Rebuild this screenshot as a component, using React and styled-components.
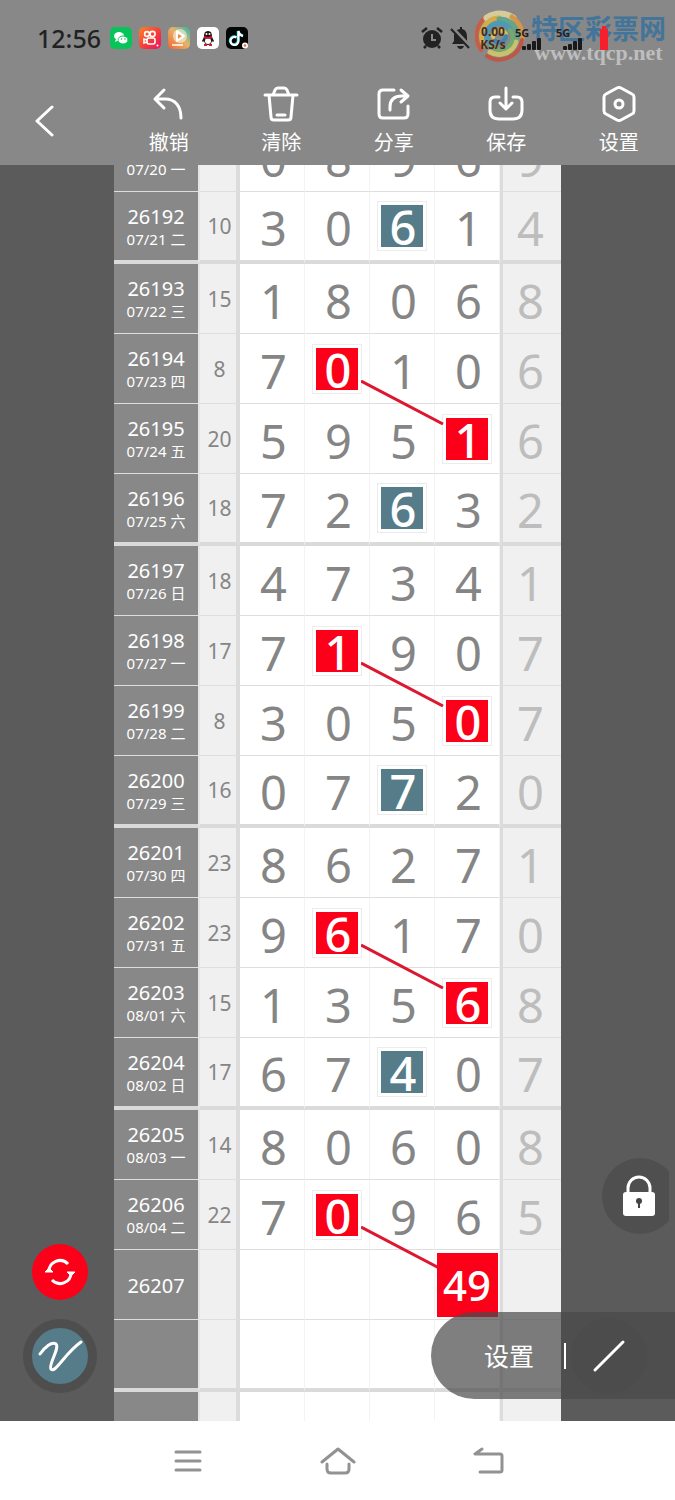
import React from "react";
import styled, { createGlobalStyle } from "styled-components";

const GlobalStyle = createGlobalStyle`
  * {
    box-sizing: border-box;
  }
  body {
    margin: 0;
    background: #fff;
    font-family: "Noto Sans", "Noto Sans CJK SC", sans-serif;
  }
  button {
    border: 0;
    padding: 0;
    background: none;
    color: inherit;
    font: inherit;
    cursor: pointer;
  }
  svg {
    display: block;
  }
`;

const Screen = styled.div`
  display: flex;
  flex-direction: column;
  height: 100vh;
  overflow: hidden;
`;

const Header = styled.header`
  flex: none;
  position: relative;
  background: #888;
  color: #fff;
`;

const StatusBar = styled.div`
  position: relative;
  z-index: 1;
  display: flex;
  align-items: center;
  justify-content: space-between;
  height: 76px;
  padding: 0 66px 0 37px;
  color: #222;
`;

const StatusGroup = styled.div`
  display: flex;
  align-items: center;
  gap: 7px;
`;

const Clock = styled.time`
  margin-right: 2px;
  font-size: 25px;
  font-weight: 500;
  line-height: 28px;
`;

const Speed = styled.div`
  width: 30px;
  color: #4a2a20;
  font-size: 12px;
  font-weight: 700;
  line-height: 13px;
  text-align: center;
`;

const Signal = styled.div`
  display: flex;
  flex-direction: column;
  width: 34px;
  font-size: 11px;
  font-weight: 700;
  line-height: 11px;
  svg {
    align-self: center;
  }
`;

const Watermark = styled.div`
  position: absolute;
  top: 9px;
  right: 9px;
  display: flex;
  align-items: center;
  gap: 6px;
  opacity: 0.8;
`;

const WatermarkText = styled.div`
  display: flex;
  flex-direction: column;
  align-items: center;
  padding-top: 4px;
`;

const SiteName = styled.span`
  color: #33709f;
  font-family: "Noto Sans CJK SC", sans-serif;
  font-size: 27px;
  font-weight: 700;
  line-height: 30px;
`;

const SiteUrl = styled.span`
  color: #ccc;
  font-family: "Liberation Serif", serif;
  font-size: 22px;
  font-weight: 700;
  line-height: 20px;
`;

const Toolbar = styled.nav`
  display: grid;
  grid-template-columns: repeat(6, 1fr);
  height: 89px;
`;

const BackButton = styled.button`
  display: flex;
  align-items: center;
  padding-left: 34px;
`;

const Tool = styled.button`
  display: flex;
  flex-direction: column;
  align-items: center;
  padding-top: 10px;
  gap: 8px;
  font-size: 20px;
  line-height: 26px;
`;

const Chart = styled.main`
  flex: 1;
  min-height: 0;
  overflow: hidden;
  position: relative;
  background: #5b5b5b;
`;

const Board = styled.table`
  width: 447px;
  margin: -43px auto 0;
  table-layout: fixed;
  border-collapse: separate;
  border-spacing: 0;
  background: #fff;
  color: #858585;
`;

const Row = styled.tr`
  height: ${(p) => (p.$last ? 72 : 70)}px;
  & > * {
    padding: 0;
    border-bottom: ${(p) => (p.$last ? "4px solid #dadada" : "1px solid #dedede")};
  }
`;

const Issue = styled.th`
  background: #888;
  border-right: 2px solid #e6e6e6;
  color: #fff;
  font-size: 20px;
  font-weight: 400;
  line-height: 24px;
`;

const IssueText = styled.div`
  padding-top: 2px;
`;

const Day = styled.div`
  font-size: 15px;
  line-height: 21px;
  white-space: nowrap;
`;

const Sum = styled.td`
  background: #f0f0f0;
  border-right: 4px solid #dcdcdc;
  font-size: 21px;
  text-align: center;
`;

const SumText = styled.div`
  padding-left: 3px;
`;

const Cell = styled.td`
  position: relative;
  border-right: 1px solid #f3f3f3;
  font-size: 47px;
  line-height: 50px;
  text-align: center;
`;

const Extra = styled.td`
  background: #f0f0f0;
  border-left: 3px solid #dcdcdc;
  color: #bdbdbd;
  font-size: 47px;
  line-height: 50px;
  text-align: center;
`;

const Digit = styled.div`
  padding: ${(p) => (p.$extra ? "4px 3px 0 0" : "4px 0 0 3px")};
`;

const Mark = styled.div`
  width: 50px;
  height: 50px;
  margin: 0 auto;
  padding-left: 2px;
  border: 1px solid #ececec;
  background: linear-gradient(${(p) => p.$color}, ${(p) => p.$color}) center / 42px 42px no-repeat #fff;
  color: #fff;
  font-weight: 500;
`;

const Pick = styled.div`
  position: relative;
  z-index: 1;
  display: flex;
  align-items: center;
  justify-content: center;
  width: 61px;
  height: 64px;
  margin: 0 auto;
  background: #fd0019;
  color: #fff;
  font-size: 42px;
  font-weight: 500;
`;

const Link = styled.svg`
  position: absolute;
  z-index: 1;
  left: 56px;
  top: 46px;
`;

const FloatLeft = styled.div`
  position: absolute;
  left: 23px;
  bottom: 28px;
  display: flex;
  flex-direction: column;
  align-items: center;
  gap: 19px;
`;

const RoundButton = styled.button`
  display: flex;
  align-items: center;
  justify-content: center;
  width: ${(p) => (p.$ring ? 74 : 56)}px;
  height: ${(p) => (p.$ring ? 74 : 56)}px;
  border: ${(p) => (p.$ring ? "9px solid #4e4e4e" : "0")};
  border-radius: 50%;
  background: ${(p) => p.$color};
`;

const LockButton = styled.button`
  position: absolute;
  right: 6px;
  bottom: 187px;
  width: 67px;
  height: 76px;
  overflow: hidden;
`;

const Pill = styled.div`
  position: absolute;
  z-index: 2;
  right: 0;
  bottom: 22px;
  display: flex;
  align-items: center;
  width: 244px;
  height: 87px;
  padding-left: 53px;
  border-radius: 44px 0 0 44px;
  background: rgba(72, 72, 72, 0.7);
  color: #fff;
`;

const PillLabel = styled.button`
  font-size: 25px;
  line-height: 32px;
`;

const Divider = styled.span`
  width: 2px;
  height: 26px;
  margin-left: 30px;
  background: #fff;
`;

const PenButton = styled.button`
  display: flex;
  align-items: center;
  justify-content: center;
  width: 76px;
  height: 76px;
  margin-left: 5px;
  border-radius: 50%;
  background: rgba(72, 72, 72, 0.3);
`;

const SystemNav = styled.nav`
  flex: none;
  display: grid;
  grid-template-columns: repeat(3, 1fr);
  height: 79px;
  padding: 0 calc(100% / 6);
  background: #fff;
`;

const NavButton = styled.button`
  display: flex;
  align-items: center;
  justify-content: center;
`;

const RED = "#fd0019";
const TEAL = "#567b89";

// sum, four digits, extra digit; r / t mark a red or teal cell
const rows = [
  ["\u00a0", "07/20 一", "23", "0", "8", "9", "6", "9"],
  ["26192", "07/21 二", "10", "3", "0", "6t", "1", "4"],
  ["26193", "07/22 三", "15", "1", "8", "0", "6", "8"],
  ["26194", "07/23 四", "8", "7", "0r", "1", "0", "6"],
  ["26195", "07/24 五", "20", "5", "9", "5", "1r", "6"],
  ["26196", "07/25 六", "18", "7", "2", "6t", "3", "2"],
  ["26197", "07/26 日", "18", "4", "7", "3", "4", "1"],
  ["26198", "07/27 一", "17", "7", "1r", "9", "0", "7"],
  ["26199", "07/28 二", "8", "3", "0", "5", "0r", "7"],
  ["26200", "07/29 三", "16", "0", "7", "7t", "2", "0"],
  ["26201", "07/30 四", "23", "8", "6", "2", "7", "1"],
  ["26202", "07/31 五", "23", "9", "6r", "1", "7", "0"],
  ["26203", "08/01 六", "15", "1", "3", "5", "6r", "8"],
  ["26204", "08/02 日", "17", "6", "7", "4t", "0", "7"],
  ["26205", "08/03 一", "14", "8", "0", "6", "0", "8"],
  ["26206", "08/04 二", "22", "7", "0r", "9", "6", "5"],
  ["26207", "", "", "", "", "", "49", ""],
  ["", "", "", "", "", "", "", ""],
  ["", "", "", "", "", "", "", ""],
];

const stroke = {
  fill: "none",
  stroke: "currentColor",
  strokeLinecap: "round",
  strokeLinejoin: "round",
};

const tools = [
  {
    label: "撤销",
    icon: <path d="M12 3 L3 12 L12 21 M3 12 H13 C23 12 29 19 29 31" />,
  },
  {
    label: "清除",
    icon: (
      <path d="M1 8 H33 M5 8 L7 30 Q7 33 10 33 H24 Q27 33 27 30 L29 8 M9 8 L11 3 Q12 1 14 1 H20 Q22 1 23 3 L25 8 M13 28 H21" />
    ),
  },
  {
    label: "分享",
    icon: (
      <path d="M17 3 H6 Q2 3 2 7 V27 Q2 31 6 31 H27 Q31 31 31 27 V19 M13 23 V20 Q13 9 25 9 H30 M24 3 L31 9 L24 15" />
    ),
  },
  {
    label: "保存",
    icon: (
      <path d="M10 10 H6 Q1 10 1 15 V23 Q1 32 10 32 H24 Q33 32 33 23 V15 Q33 10 28 10 H24 M17 1 V21 M11 16 L17 22 L23 16" />
    ),
  },
  {
    label: "设置",
    icon: (
      <>
        <path d="M15 1 Q17 0 19 1 L30 7 Q32 8 32 10 V24 Q32 26 30 27 L19 33 Q17 34 15 33 L4 27 Q2 26 2 24 V10 Q2 8 4 7 Z" />
        <circle cx="17" cy="17" r="4" />
      </>
    ),
  },
];

const AppIcons = () => (
  <svg width="140" height="22" viewBox="0 0 140 22">
    <defs>
      <linearGradient id="orange" x1="0" y1="0" x2="1" y2="1">
        <stop offset="0" stopColor="#ff8126" />
        <stop offset="0.6" stopColor="#f4363b" />
        <stop offset="1" stopColor="#e91569" />
      </linearGradient>
      <linearGradient id="video" x1="1" y1="0" x2="0" y2="1">
        <stop offset="0" stopColor="#25b9a7" />
        <stop offset="0.45" stopColor="#e6b36c" />
        <stop offset="1" stopColor="#f4642c" />
      </linearGradient>
    </defs>
    <rect width="22" height="22" rx="5" fill="#06c35a" />
    <ellipse cx="9" cy="9" rx="5" ry="4" fill="#fff" />
    <ellipse cx="13" cy="13" rx="5" ry="4" fill="#fff" stroke="#06c35a" />
    <path d="M6 12 L5 15 L9 13 Z" fill="#fff" />
    <circle cx="11.500" cy="12" r="0.800" fill="#06c35a" />
    <circle cx="15" cy="12" r="0.800" fill="#06c35a" />

    <g transform="translate(29 0)">
      <rect width="22" height="22" rx="5" fill="url(#orange)" />
      <g fill="none" stroke="#fff" strokeWidth="1.6">
        <circle cx="8" cy="7" r="2.400" />
        <circle cx="13.500" cy="7" r="2.600" />
        <rect x="8" y="11" width="8" height="6" rx="2" />
        <path d="M8 13 L5 12 V16 L8 15" />
      </g>
      <circle cx="18.500" cy="18.500" r="1" fill="#fff" />
    </g>

    <g transform="translate(58 0)">
      <rect width="22" height="22" rx="5" fill="url(#video)" />
      <circle cx="12" cy="9" r="7" fill="#fff" opacity="0.5" />
      <path d="M9 4 L16 9 L9 14 Z" fill="#fff" stroke="#fff" strokeWidth="2" strokeLinejoin="round" />
      <path d="M10 7 L14 9 L10 12 Z" fill="#f1902f" />
      <path d="M4 18 H15" stroke="#ffe0d0" strokeWidth="2" />
    </g>

    <g transform="translate(87 0)">
      <rect width="22" height="22" rx="5" fill="#fff" />
      <path d="M11 4 C7 4 7 8 7 10 L5 14 L6 15 L7 14 Q8 18 11 18 Q14 18 15 14 L16 15 L17 14 L15 10 C15 8 15 4 11 4 Z" fill="#201618" />
      <ellipse cx="11" cy="14" rx="3" ry="3" fill="#fff" />
      <path d="M7 10 Q11 12 15 10" stroke="#d31831" strokeWidth="2" fill="none" />
      <path d="M7 18 H10 M12 18 H15" stroke="#d31831" strokeWidth="2" />
      <circle cx="9.500" cy="7" r="1" fill="#fff" />
      <circle cx="12.500" cy="7" r="1" fill="#fff" />
    </g>

    <g transform="translate(116 0)">
      <rect width="22" height="22" rx="5" fill="#050505" />
      <path d="M10 10 A4 4 0 1 0 12 14 V4 Q13 8 17 9" stroke="#29d9dc" strokeWidth="2.500" fill="none" />
      <path d="M10.500 10.500 A4 4 0 1 0 12.500 14 V4 Q13 8 17 9" stroke="#fff" strokeWidth="2.200" fill="none" />
      <circle cx="19" cy="18.500" r="3" fill="#fff" />
      <circle cx="19" cy="18.500" r="1.300" fill="#ef6938" />
    </g>
  </svg>
);

const AlarmIcon = () => (
  <svg width="22" height="24" viewBox="0 0 22 24">
    <circle cx="11" cy="13" r="9" fill="#222" />
    <path d="M1 6 L6 2 M21 6 L16 2 M5 20 L3 22 M17 20 L19 22" stroke="#222" strokeWidth="2.500" />
    <path d="M11 8 V14 H15" fill="none" stroke="#888" strokeWidth="2" />
  </svg>
);

const BellOffIcon = () => (
  <svg width="21" height="24" viewBox="0 0 21 24">
    <path d="M10 1 V3 C5 4 4 7 4 11 V15 L2 18 H19 L17 15 V11 C17 7 16 4 12 3 V1 Z M7 20 H14 Q13 23 10.500 23 Q8 23 7 20 Z" fill="#222" />
    <path d="M2 2 L21 22" stroke="#888" strokeWidth="4" />
    <path d="M1 3 L19 22" stroke="#222" strokeWidth="2" />
  </svg>
);

const Bars = () => (
  <svg width="20" height="12" viewBox="0 0 20 12" fill="#1a1a1a">
    <rect x="0" y="8" width="4" height="4" rx="1" />
    <rect x="5" y="6" width="4" height="6" rx="1" />
    <rect x="10" y="3" width="4" height="9" rx="1" />
    <rect x="15" y="0" width="4" height="12" rx="1" />
  </svg>
);

const Swirl = () => (
  <svg width="50" height="52" viewBox="0 0 50 52" fill="none" strokeLinecap="round">
    <path d="M6 40 A24 24 0 0 1 14 5" stroke="#d95432" strokeWidth="4" />
    <path d="M12 8 A23 23 0 0 1 38 8" stroke="#e9dca0" strokeWidth="7" />
    <path d="M37 7 A24 24 0 0 1 47 30" stroke="#e79a3b" strokeWidth="5" />
    <path d="M47 30 A23 23 0 0 1 12 46" stroke="#cf4a36" strokeWidth="4" />
    <path d="M9 35 A18 18 0 0 1 24 8" stroke="#e8b53e" strokeWidth="5" />
    <path d="M24 9 A17 17 0 0 1 41 32" stroke="#5aab8d" strokeWidth="5" />
    <path d="M41 32 A18 18 0 0 1 15 42" stroke="#d9d16a" strokeWidth="5" />
    <path d="M14 33 A12 12 0 0 1 34 18" stroke="#3d9fc4" strokeWidth="5" />
    <path d="M35 20 A12 12 0 0 1 16 35" stroke="#6cb36a" strokeWidth="4" />
    <path d="M18 27 A7 7 0 0 1 31 24" stroke="#e7d546" strokeWidth="4" />
    <path d="M31 26 A7 7 0 0 1 20 31" stroke="#2f86b9" strokeWidth="4" />
  </svg>
);

const BoardCell = ({ value, linked }) => {
  if (!value) return <Cell />;
  if (value === "49")
    return (
      <Cell>
        <Pick>{value}</Pick>
      </Cell>
    );
  if (value.length === 1)
    return (
      <Cell>
        <Digit>{value}</Digit>
      </Cell>
    );
  return (
    <Cell>
      <Mark $color={value[1] === "r" ? RED : TEAL}>{value[0]}</Mark>
      {linked && (
        <Link width="83" height="45" viewBox="0 0 83 45">
          <path d="M0 1 L82 44" stroke="#dc1730" strokeWidth="3" />
        </Link>
      )}
    </Cell>
  );
};

const App = () => {
  return (
    <Screen>
      <GlobalStyle />
      <Header>
        <Watermark>
          <Swirl />
          <WatermarkText>
            <SiteName>特区彩票网</SiteName>
            <SiteUrl>www.tqcp.net</SiteUrl>
          </WatermarkText>
        </Watermark>
        <StatusBar>
          <StatusGroup>
            <Clock>12:56</Clock>
            <AppIcons />
          </StatusGroup>
          <StatusGroup>
            <AlarmIcon />
            <BellOffIcon />
            <Speed>
              0.00
              <br />
              KS/s
            </Speed>
            <Signal>
              5G
              <Bars />
            </Signal>
            <Signal>
              5G
              <Bars />
            </Signal>
            <svg width="12" height="26" viewBox="2 0 12 26">
              <path d="M7 1 H11 V4 H13 V25 H5 V4 H7 Z" fill="#f5202b" />
            </svg>
          </StatusGroup>
        </StatusBar>
        <Toolbar>
          <BackButton aria-label="返回">
            <svg width="20" height="32" viewBox="0 0 20 32" strokeWidth="3" {...stroke}>
              <path d="M18 2 L3 16 L18 30" />
            </svg>
          </BackButton>
          {tools.map((t) => (
            <Tool key={t.label}>
              <svg width="36" height="36" viewBox="-1 -1 36 36" strokeWidth="3" {...stroke}>
                {t.icon}
              </svg>
              {t.label}
            </Tool>
          ))}
        </Toolbar>
      </Header>

      <Chart>
        <Board>
          <colgroup>
            <col width="86" />
            <col width="40" />
            <col width="65" />
            <col width="65" />
            <col width="65" />
            <col width="65" />
            <col width="61" />
          </colgroup>
          <tbody>
            {rows.map(([issue, day, sum, a, b, c, d, extra], i) => (
              <Row key={i} $last={i % 4 === 1}>
                <Issue scope="row">
                  <IssueText>{issue}</IssueText>
                  {day && <Day>{day}</Day>}
                </Issue>
                <Sum>
                  <SumText>{sum}</SumText>
                </Sum>
                <BoardCell value={a} />
                <BoardCell value={b} linked />
                <BoardCell value={c} />
                <BoardCell value={d} />
                <Extra>{extra && <Digit $extra>{extra}</Digit>}</Extra>
              </Row>
            ))}
          </tbody>
        </Board>

        <FloatLeft>
          <RoundButton $color={RED} aria-label="刷新">
            <svg width="32" height="28" viewBox="0 0 32 28" fill="none" stroke="#fff" strokeWidth="3">
              <path d="M5 14 A11 11 0 0 1 24 6 M27 14 A11 11 0 0 1 8 22" />
              <path d="M1 14 L5 10 L9 14 Z M23 14 L27 18 L31 14 Z" transform="rotate(0)" fill="#fff" strokeWidth="1" />
            </svg>
          </RoundButton>
          <RoundButton $ring $color={TEAL} aria-label="画笔">
            <svg width="46" height="34" viewBox="0 0 46 34" fill="none" stroke="#fff" strokeWidth="3" strokeLinecap="round">
              <path d="M3 15 C8 8 15 2 19 5 C23 9 11 26 14 30 C18 35 28 14 44 3" />
            </svg>
          </RoundButton>
        </FloatLeft>

        <LockButton aria-label="锁定">
          <svg width="76" height="76" viewBox="0 0 76 76">
            <circle cx="38" cy="38" r="38" fill="#4f4f4f" />
            <path d="M26 37 V30 A11 11 0 0 1 48 30 V37" fill="none" stroke="#fff" strokeWidth="3" />
            <rect x="21" y="34" width="32" height="24" rx="3" fill="#fff" />
            <circle cx="37" cy="43" r="3" fill="#444" />
            <path d="M37 43 V50" stroke="#444" strokeWidth="2" />
          </svg>
        </LockButton>

        <Pill>
          <PillLabel>设置</PillLabel>
          <Divider />
          <PenButton aria-label="直线">
            <svg width="34" height="34" viewBox="0 0 34 34" strokeWidth="3" {...stroke}>
              <path d="M3 31 L31 3" />
            </svg>
          </PenButton>
        </Pill>
      </Chart>

      <SystemNav>
        <NavButton aria-label="菜单">
          <svg width="28" height="24" viewBox="0 0 28 24" stroke="#929292" strokeWidth="3" strokeLinecap="round">
            <path d="M2 3 H26 M2 12 H26 M2 21 H26" />
          </svg>
        </NavButton>
        <NavButton aria-label="主页">
          <svg width="36" height="28" viewBox="0 0 36 28" fill="none" stroke="#929292" strokeWidth="3" strokeLinecap="round" strokeLinejoin="round">
            <path d="M2 15 L18 2 L34 15 M7 17 V22 Q7 26 11 26 H25 Q29 26 29 22 V17" />
          </svg>
        </NavButton>
        <NavButton aria-label="返回">
          <svg width="32" height="28" viewBox="0 0 32 28" fill="none" stroke="#929292" strokeWidth="3" strokeLinecap="round" strokeLinejoin="round">
            <path d="M10 2 L3 7 H28 Q30 7 30 9 V23 Q30 25 28 25 H8" />
          </svg>
        </NavButton>
      </SystemNav>
    </Screen>
  );
};

export default App;
